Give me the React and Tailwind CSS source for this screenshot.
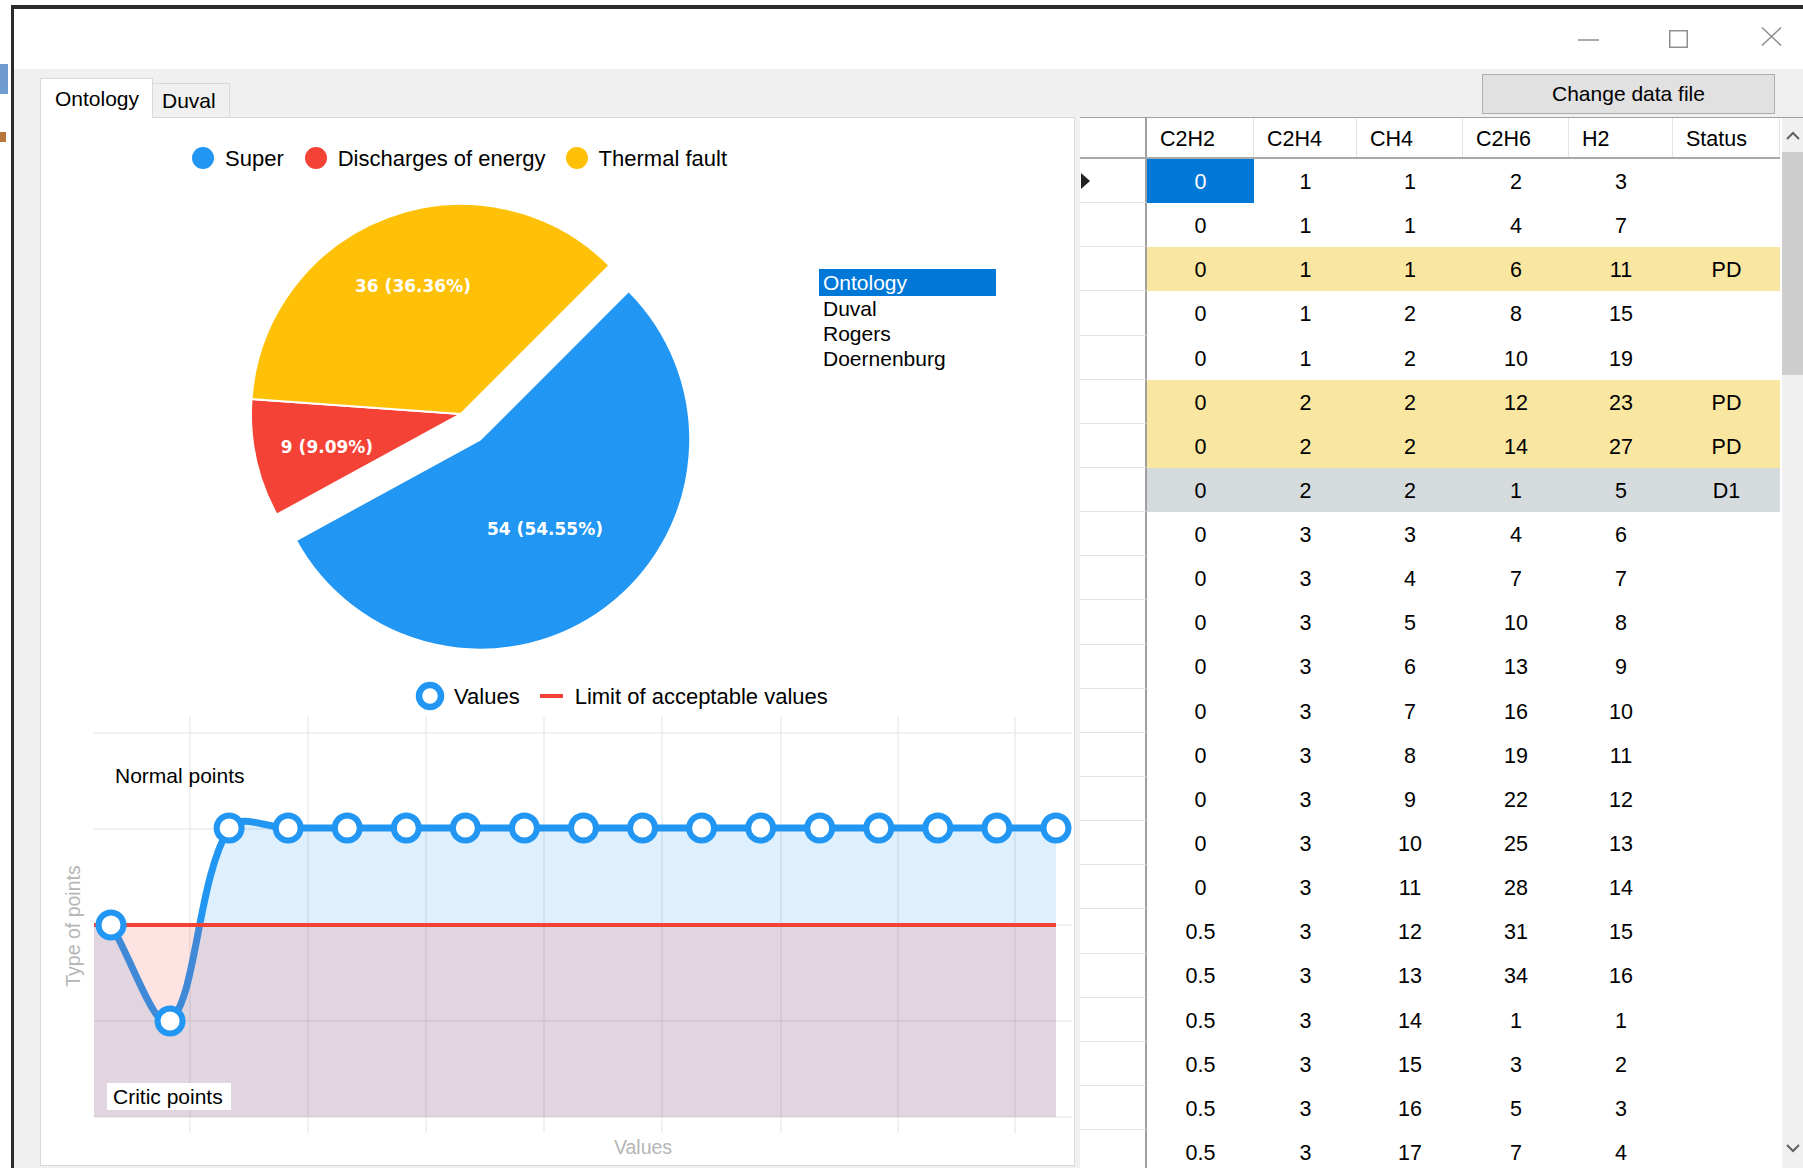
import React from 'react';

const SANS = "font-['Liberation_Sans',Arial,sans-serif]";

const columns = [
  { name: 'C2H2', w: 'w-[107px]' },
  { name: 'C2H4', w: 'w-[103px]' },
  { name: 'CH4', w: 'w-[106px]' },
  { name: 'C2H6', w: 'w-[106px]' },
  { name: 'H2', w: 'w-[104px]' },
  { name: 'Status', w: 'w-[107px]' },
];

const rows = [
  ['0', '1', '1', '2', '3', ''],
  ['0', '1', '1', '4', '7', ''],
  ['0', '1', '1', '6', '11', 'PD'],
  ['0', '1', '2', '8', '15', ''],
  ['0', '1', '2', '10', '19', ''],
  ['0', '2', '2', '12', '23', 'PD'],
  ['0', '2', '2', '14', '27', 'PD'],
  ['0', '2', '2', '1', '5', 'D1'],
  ['0', '3', '3', '4', '6', ''],
  ['0', '3', '4', '7', '7', ''],
  ['0', '3', '5', '10', '8', ''],
  ['0', '3', '6', '13', '9', ''],
  ['0', '3', '7', '16', '10', ''],
  ['0', '3', '8', '19', '11', ''],
  ['0', '3', '9', '22', '12', ''],
  ['0', '3', '10', '25', '13', ''],
  ['0', '3', '11', '28', '14', ''],
  ['0.5', '3', '12', '31', '15', ''],
  ['0.5', '3', '13', '34', '16', ''],
  ['0.5', '3', '14', '1', '1', ''],
  ['0.5', '3', '15', '3', '2', ''],
  ['0.5', '3', '16', '5', '3', ''],
  ['0.5', '3', '17', '7', '4', ''],
];

// status colouring of the grid rows
const rowTint = {
  PD: 'bg-[#f9e6a1]',
  D1: 'bg-[#d5dadc]',
};

// ---- pie ----
const PIE = { cx: 461, cy: 414, r: 210, start: -45 };
const slices = [
  { value: 54, color: '#2196f3', push: 32 },
  { value: 9, color: '#f44336', push: 0 },
  { value: 36, color: '#ffc107', push: 0 },
];

function piePaths() {
  const total = slices.reduce((s, x) => s + x.value, 0);
  let a = PIE.start;
  return slices.map((s) => {
    const sweep = (s.value / total) * 360;
    const a0 = a;
    const a1 = a + sweep;
    a = a1;
    const mid = ((a0 + a1) / 2) * (Math.PI / 180);
    const cx = PIE.cx + Math.cos(mid) * s.push;
    const cy = PIE.cy + Math.sin(mid) * s.push;
    const r0 = a0 * (Math.PI / 180);
    const r1 = a1 * (Math.PI / 180);
    const x0 = cx + PIE.r * Math.cos(r0);
    const y0 = cy + PIE.r * Math.sin(r0);
    const x1 = cx + PIE.r * Math.cos(r1);
    const y1 = cy + PIE.r * Math.sin(r1);
    const large = sweep > 180 ? 1 : 0;
    return {
      color: s.color,
      d: `M${cx},${cy} L${x0},${y0} A${PIE.r},${PIE.r} 0 ${large} 1 ${x1},${y1} Z`,
    };
  });
}

// ---- line chart ----
const values = [925, 1021, 828, 828, 828, 828, 828, 828, 828, 828, 828, 828, 828, 828, 828, 828, 828];
const pts = values.map((y, i) => [111 + i * 59.06, y]);
const BASE = 1117;
const LIMIT = 925;

// bezier smoothing, same idea as the chart lib's LineSmoothness
function smoothPath(p, s = 0.7) {
  let d = `M${p[0][0]},${p[0][1]}`;
  for (let i = 0; i < p.length - 1; i++) {
    const p0 = p[i - 1] || p[i];
    const p1 = p[i];
    const p2 = p[i + 1];
    const p3 = p[i + 2] || p2;
    const xc1 = (p0[0] + p1[0]) / 2, yc1 = (p0[1] + p1[1]) / 2;
    const xc2 = (p1[0] + p2[0]) / 2, yc2 = (p1[1] + p2[1]) / 2;
    const xc3 = (p2[0] + p3[0]) / 2, yc3 = (p2[1] + p3[1]) / 2;
    const l1 = Math.hypot(p1[0] - p0[0], p1[1] - p0[1]);
    const l2 = Math.hypot(p2[0] - p1[0], p2[1] - p1[1]);
    const l3 = Math.hypot(p3[0] - p2[0], p3[1] - p2[1]);
    const k1 = l1 + l2 === 0 ? 0 : l1 / (l1 + l2);
    const k2 = l2 + l3 === 0 ? 0 : l2 / (l2 + l3);
    const xm1 = xc1 + (xc2 - xc1) * k1, ym1 = yc1 + (yc2 - yc1) * k1;
    const xm2 = xc2 + (xc3 - xc2) * k2, ym2 = yc2 + (yc3 - yc2) * k2;
    const c1x = xm1 + (xc2 - xm1) * s + p1[0] - xm1;
    const c1y = ym1 + (yc2 - ym1) * s + p1[1] - ym1;
    const c2x = xm2 + (xc2 - xm2) * s + p2[0] - xm2;
    const c2y = ym2 + (yc2 - ym2) * s + p2[1] - ym2;
    d += ` C${c1x},${c1y} ${c2x},${c2y} ${p2[0]},${p2[1]}`;
  }
  return d;
}

const linePath = smoothPath(pts);
const last = pts[pts.length - 1];
const areaPath = `M94,${BASE} L94,${LIMIT} L${pts[0][0]},${pts[0][1]} ${linePath.slice(linePath.indexOf('C'))} L${last[0]},${BASE} Z`;
const vGrid = [190, 308, 426, 544, 662, 781, 898, 1015];
const hGrid = [733, 829, 925, 1021, 1117];

function LegendDot({ color }) {
  return <span className={`w-[22px] h-[22px] rounded-full shrink-0 ${color}`} />;
}

function PieChart() {
  const paths = piePaths();
  return (
    <div className="relative w-[460px] h-[470px] shrink-0 ml-[199px]">
      <svg width="460" height="470" viewBox="240 195 460 470" className="absolute inset-0">
        {paths.map((p, i) => (
          <path key={i} d={p.d} fill={p.color} stroke="#fff" strokeWidth="2" strokeLinejoin="round" />
        ))}
      </svg>
      <span className="absolute left-[173px] top-[92px] -translate-x-1/2 -translate-y-1/2 whitespace-nowrap font-['DejaVu_Sans',sans-serif] font-bold text-[17px] text-white">36 (36.36%)</span>
      <span className="absolute left-[87px] top-[253px] -translate-x-1/2 -translate-y-1/2 whitespace-nowrap font-['DejaVu_Sans',sans-serif] font-bold text-[17px] text-white">9 (9.09%)</span>
      <span className="absolute left-[305px] top-[335px] -translate-x-1/2 -translate-y-1/2 whitespace-nowrap font-['DejaVu_Sans',sans-serif] font-bold text-[17px] text-white">54 (54.55%)</span>
    </div>
  );
}

function LineChart() {
  return (
    <div className="relative h-[456px] w-full">
      <svg width="1033" height="456" viewBox="41 709 1033 456" className="absolute inset-0">
        {vGrid.map((x) => (
          <line key={x} x1={x} y1="717" x2={x} y2="1133" stroke="#ebebeb" strokeWidth="1.5" />
        ))}
        {hGrid.map((y) => (
          <line key={y} x1="94" y1={y} x2="1072" y2={y} stroke="#ebebeb" strokeWidth="1.5" />
        ))}
        <path d={areaPath} fill="#2196f3" fillOpacity="0.15" />
        <path d={linePath} fill="none" stroke="#2196f3" strokeWidth="7" strokeLinejoin="round" />
        <rect x="94" y={LIMIT} width={last[0] - 94} height={BASE - LIMIT} fill="#f44336" fillOpacity="0.15" />
        <line x1="94" y1={LIMIT} x2={last[0]} y2={LIMIT} stroke="#f44336" strokeWidth="4" />
        {pts.map(([x, y], i) => (
          <circle key={i} cx={x} cy={y} r="12.5" fill="#fff" stroke="#2196f3" strokeWidth="6" />
        ))}
      </svg>
      <span className="absolute left-[74px] top-[54px] leading-[26px] text-[21px] whitespace-nowrap">Normal points</span>
      <span className="absolute left-[66px] top-[374px] h-[27px] w-[124px] pl-[6px] bg-white leading-[27px] text-[21px] whitespace-nowrap">Critic points</span>
      <span className="absolute left-[33px] top-[217px] -translate-x-1/2 -translate-y-1/2 -rotate-90 whitespace-nowrap text-[19.5px] text-[#b5b5b5]">Type of points</span>
      <span className="absolute left-[602px] top-[439px] -translate-x-1/2 -translate-y-1/2 whitespace-nowrap text-[19.5px] text-[#b5b5b5]">Values</span>
    </div>
  );
}

function MethodList() {
  const items = ['Ontology', 'Duval', 'Rogers', 'Doernenburg'];
  return (
    <div className="ml-[119px] mt-[74px] w-[177px] flex flex-col text-[21px]">
      {items.map((it, i) => (
        <div
          key={it}
          className={i === 0 ? 'h-[27px] leading-[27px] pl-[4px] bg-[#0078d7] text-white' : 'h-[25px] leading-[25px] pl-[4px]'}
        >
          {it}
        </div>
      ))}
    </div>
  );
}

function DataGrid() {
  return (
    <div className="flex mt-[3px] h-[1051px] border-t border-[#a0a0a0]">
      <div className="w-[700px] shrink-0 bg-white flex flex-col text-[21.5px]">
        <div className="flex h-[41px] shrink-0 border-b-2 border-[#a9a9a9]">
          <div className="w-[67px] shrink-0 border-r-2 border-[#a0a0a0]" />
          {columns.map((c) => (
            <div key={c.name} className={`${c.w} shrink-0 flex items-center pl-[13px] pt-[3px] border-r border-[#e3e3e3]`}>
              {c.name}
            </div>
          ))}
        </div>
        {rows.map((r, ri) => (
          <div key={ri} className="flex h-[44.15px] shrink-0">
            <div className="w-[67px] shrink-0 flex items-center border-r-2 border-[#a0a0a0] border-b border-b-[#e4e4e4]">
              {ri === 0 && (
                <svg width="10" height="16" viewBox="0 0 10 16" className="ml-[1px]">
                  <path d="M0 0 L9 8 L0 16 Z" fill="#222" />
                </svg>
              )}
            </div>
            <div className={`flex flex-1 ${rowTint[r[5]] || ''}`}>
              {r.map((v, ci) => (
                <div
                  key={ci}
                  className={`${columns[ci].w} shrink-0 flex items-center justify-center pt-[2px] ${ri === 0 && ci === 0 ? 'bg-[#0078d7] text-white' : ''}`}
                >
                  {v}
                </div>
              ))}
            </div>
          </div>
        ))}
      </div>
      <div className="w-[2px] shrink-0 bg-white" />
      <div className="flex-1 bg-[#f0f0f0] flex flex-col items-center">
        <svg width="14" height="9" viewBox="0 0 14 9" className="mt-[13px]">
          <path d="M1 8 L7 2 L13 8" fill="none" stroke="#606060" strokeWidth="2" />
        </svg>
        <div className="w-full h-[223px] mt-[12px] bg-[#cdcdcd]" />
        <div className="flex-1" />
        <svg width="14" height="9" viewBox="0 0 14 9" className="mb-[15px]">
          <path d="M1 1 L7 7 L13 1" fill="none" stroke="#606060" strokeWidth="2" />
        </svg>
      </div>
    </div>
  );
}

export default function App() {
  return (
    <div className={`w-[1803px] h-[1168px] overflow-hidden bg-white text-black ${SANS}`}>
      <div className="flex h-full">
        {/* bit of desktop left of the window */}
        <div className="w-[11px] shrink-0 flex flex-col bg-white">
          <div className="h-[64px]" />
          <div className="h-[30px] w-[8px] bg-[#6f9ccf]" />
          <div className="h-[38px]" />
          <div className="h-[10px] w-[6px] bg-[#b8763a]" />
        </div>

        <div className="flex-1 flex flex-col pt-[5px] min-w-0">
          <div className="flex-1 flex flex-col border-t-4 border-l-[3px] border-[#2b2b2b] min-h-0">
            {/* title bar */}
            <div className="h-[60px] shrink-0 bg-white flex items-start justify-end pr-[21px]">
              <svg width="21" height="2" viewBox="0 0 21 2" className="mt-[30px]">
                <line x1="0" y1="1" x2="21" y2="1" stroke="#8f8f8f" strokeWidth="1.5" />
              </svg>
              <svg width="19" height="18" viewBox="0 0 19 18" className="ml-[70px] mt-[21px]">
                <rect x="0.75" y="0.75" width="17.5" height="16.5" fill="none" stroke="#8f8f8f" strokeWidth="1.5" />
              </svg>
              <svg width="21" height="19" viewBox="0 0 21 19" className="ml-[73px] mt-[18px]">
                <path d="M1 0.5 L20 18.5 M20 0.5 L1 18.5" stroke="#8f8f8f" strokeWidth="1.5" />
              </svg>
            </div>

            {/* form body */}
            <div className="flex-1 bg-[#f0f0f0] flex min-h-0">
              <div className="ml-[26px] w-[1035px] shrink-0 flex flex-col pt-[9px]">
                <div className="flex items-end h-[40px] -mb-px text-[21px]">
                  <div className="relative z-10 h-[40px] w-[113px] pl-[14px] flex items-center bg-white border border-b-0 border-[#d9d9d9]">
                    Ontology
                  </div>
                  <div className="h-[35px] w-[77px] pl-[9px] flex items-center border border-l-0 border-[#d9d9d9] bg-[#f0f0f0]">
                    Duval
                  </div>
                </div>
                <div className="h-[1049px] bg-white border border-[#d9d9d9] flex flex-col">
                  <div className="flex items-center h-[26px] mt-[27px] ml-[151px] text-[22px] whitespace-nowrap">
                    <LegendDot color="bg-[#2196f3]" />
                    <span className="ml-[11px]">Super</span>
                    <span className="ml-[21px]"><LegendDot color="bg-[#f44336] block" /></span>
                    <span className="ml-[11px]">Discharges of energy</span>
                    <span className="ml-[20px]"><LegendDot color="bg-[#ffc107] block" /></span>
                    <span className="ml-[11px]">Thermal fault</span>
                  </div>

                  <div className="flex items-start mt-[24px]">
                    <PieChart />
                    <MethodList />
                  </div>

                  <div className="flex items-center h-[26px] mt-[18px] ml-[374px] text-[22px] whitespace-nowrap">
                    <svg width="30" height="30" viewBox="0 0 30 30">
                      <circle cx="15" cy="15" r="11" fill="#fff" stroke="#2196f3" strokeWidth="6.5" />
                    </svg>
                    <span className="ml-[9px]">Values</span>
                    <span className="ml-[20px] w-[23px] h-[4px] bg-[#f44336]" />
                    <span className="ml-[12px]">Limit of acceptable values</span>
                  </div>

                  <LineChart />
                </div>
              </div>

              <div className="ml-[5px] flex-1 flex flex-col pt-[5px] min-w-0">
                <div className="flex justify-end pr-[28px]">
                  <div className="h-[40px] w-[293px] flex items-center justify-center bg-[#e1e1e1] border border-[#adadad] text-[21px]">
                    Change data file
                  </div>
                </div>
                <DataGrid />
              </div>
            </div>
          </div>
        </div>
      </div>
    </div>
  );
}
